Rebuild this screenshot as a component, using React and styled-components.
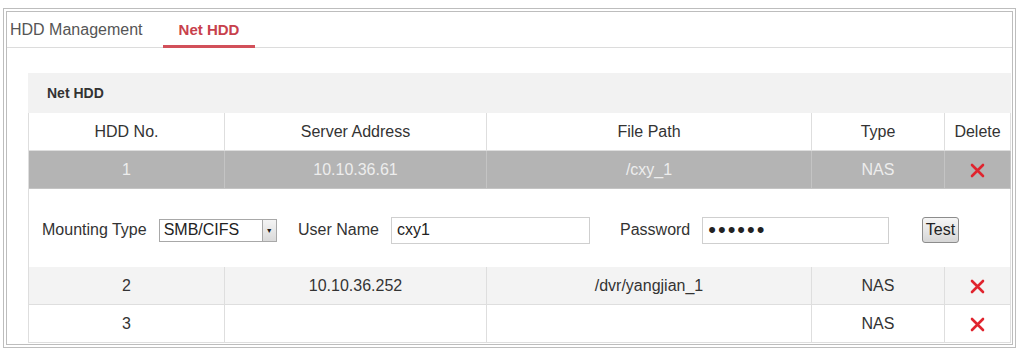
import React from 'react'
import styled, { createGlobalStyle } from 'styled-components'

const Global = createGlobalStyle`
    body {
        margin: 0;
        background: #fff;
        font-family: "Liberation Sans", Arial, sans-serif;
        color: #333;
    }
`

const Frame = styled.div`
    box-sizing: border-box;
    margin: 8px 0 0 3px;
    width: 1013px;
    height: 340px;
    border: 4px double #bdbdbd;
`

const TabBar = styled.div`
    display: flex;
    height: 35px;
    border-bottom: 1px solid #dcdcdc;
`

const Tab = styled.div`
    box-sizing: border-box;
    display: flex;
    align-items: center;
    justify-content: ${props => props.active ? 'center' : 'flex-start'};
    width: ${props => props.w}px;
    padding: 2px 0 0 ${props => props.active ? 0 : 3}px;
    font-size: ${props => props.active ? 15 : 16}px;
    color: ${props => props.active ? '#c8414c' : '#555'};
    font-weight: ${props => props.active ? 'bold' : 'normal'};
    border-bottom: 3px solid ${props => props.active ? '#d2505a' : 'transparent'};
    margin-bottom: -1px;
`

const Content = styled.div`
    padding: 25px 1px 0 21px;
`

const SectionHead = styled.div`
    display: flex;
    align-items: center;
    height: 40px;
    padding-left: 19px;
    background: #f2f2f2;
    font-size: 14px;
    font-weight: bold;
    color: #333;
`

const Table = styled.div`
    border-left: 1px solid #dedede;
`

const Row = styled.div`
    display: grid;
    grid-template-columns: 196px 262px 325px 133px 66px;
    height: 38px;
    background: ${props => props.bg || '#fff'};
    color: ${props => props.light ? '#ededed' : '#333'};
`

const Cell = styled.div`
    display: flex;
    align-items: center;
    justify-content: center;
    padding-top: 1px;
    font-size: 16px;
    border-right: 1px solid ${props => props.dark ? '#c4c4c4' : '#dedede'};
    border-bottom: 1px solid ${props => props.dark ? '#c4c4c4' : '#dedede'};
`

const Detail = styled.div`
    box-sizing: border-box;
    display: flex;
    align-items: center;
    height: 78px;
    padding: 4px 0 0 13px;
    border-right: 1px solid #dedede;
    font-size: 16px;
`

const Field = styled.div`
    display: flex;
    align-items: center;
    gap: 12px;
    width: ${props => props.w}px;
    flex-shrink: 0;
`

const Select = styled.div`
    display: flex;
    align-items: stretch;
    width: 118px;
    height: 23px;
    box-sizing: border-box;
    border: 1px solid #a8a8a8;
    font-size: 16px;
    color: #222;
`

const SelectText = styled.div`
    flex: 1;
    display: flex;
    align-items: center;
    padding-left: 4px;
`

const SelectArrow = styled.div`
    width: 13px;
    display: flex;
    align-items: center;
    justify-content: center;
    background: linear-gradient(#f4f4f4, #dadada);
    border-left: 1px solid #a8a8a8;
    font-size: 7px;
    color: #222;
`

const Input = styled.input`
    box-sizing: border-box;
    width: ${props => props.w}px;
    height: 27px;
    border: 1px solid #cfcfcf;
    padding: 0 5px;
    font-family: "Liberation Sans", Arial, sans-serif;
    font-size: ${props => props.type === 'password' ? 22 : 16}px;
    color: #222;
    outline: none;
    letter-spacing: ${props => props.type === 'password' ? '2px' : '0'};
`

const Button = styled.button`
    width: 37px;
    height: 26px;
    padding: 0;
    border: 1px solid #8c8c8c;
    border-radius: 3px;
    background: linear-gradient(#f6f6f6, #d6d6d6);
    font-family: "Liberation Sans", Arial, sans-serif;
    font-size: 16px;
    color: #222;
`

const Cross = () => (
    <svg width="15" height="15" viewBox="0 0 15 15">
        <path d="M2 2 L13 13 M13 2 L2 13" stroke="#e0242e" strokeWidth="2.6" strokeLinecap="round" />
    </svg>
)

const disks = [
    { no: '2', addr: '10.10.36.252', path: '/dvr/yangjian_1', type: 'NAS', bg: '#f3f3f3' },
    { no: '3', addr: '', path: '', type: 'NAS', bg: '#fff' },
]

function App() {
    return (
        <>
            <Global />
            <Frame>
                <TabBar>
                    <Tab w={156}>HDD Management</Tab>
                    <Tab w={92} active>Net HDD</Tab>
                </TabBar>
                <Content>
                    <SectionHead>Net HDD</SectionHead>
                    <Table>
                        <Row>
                            <Cell>HDD No.</Cell>
                            <Cell>Server Address</Cell>
                            <Cell>File Path</Cell>
                            <Cell>Type</Cell>
                            <Cell>Delete</Cell>
                        </Row>
                        <Row bg="#b4b4b4" light>
                            <Cell dark>1</Cell>
                            <Cell dark>10.10.36.61</Cell>
                            <Cell dark>/cxy_1</Cell>
                            <Cell dark>NAS</Cell>
                            <Cell dark><Cross /></Cell>
                        </Row>
                        <Detail>
                            <Field w={256}>
                                Mounting Type
                                <Select>
                                    <SelectText>SMB/CIFS</SelectText>
                                    <SelectArrow>▼</SelectArrow>
                                </Select>
                            </Field>
                            <Field w={322}>
                                User Name
                                <Input w={199} defaultValue="cxy1" />
                            </Field>
                            <Field w={302}>
                                Password
                                <Input w={187} type="password" defaultValue="cxy123" />
                            </Field>
                            <Button>Test</Button>
                        </Detail>
                        {disks.map(d => (
                            <Row key={d.no} bg={d.bg}>
                                <Cell>{d.no}</Cell>
                                <Cell>{d.addr}</Cell>
                                <Cell>{d.path}</Cell>
                                <Cell>{d.type}</Cell>
                                <Cell><Cross /></Cell>
                            </Row>
                        ))}
                    </Table>
                </Content>
            </Frame>
        </>
    )
}

export default App
